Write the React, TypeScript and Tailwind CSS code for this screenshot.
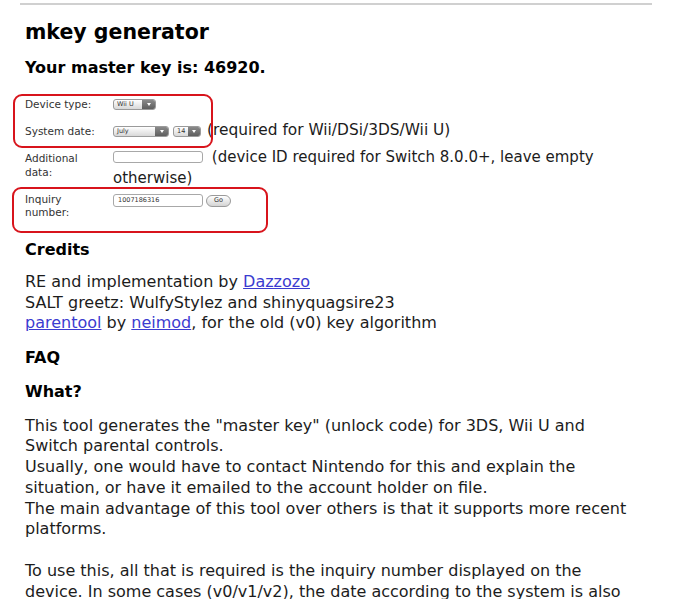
import React from "react";

const font = { fontFamily: '"DejaVu Sans", Verdana, sans-serif' };

function FakeSelect({ label, width, arrow = 13 }: { label: string; width: number; arrow?: number }) {
  return (
    <div
      className="flex h-[11px] overflow-hidden rounded-[3px] border border-[#9a9a9a] bg-gradient-to-b from-[#ffffff] to-[#d8d8d8]"
      style={{ width }}
    >
      <div className="flex-1 pl-[3px] text-[6.5px] leading-[9px] whitespace-nowrap text-[#333]">{label}</div>
      <div
        className="flex shrink-0 items-center justify-center bg-gradient-to-b from-[#8a8a8a] to-[#5e5e5e]"
        style={{ width: arrow }}
      >
        <div className="h-0 w-0 border-x-[2.5px] border-t-[3px] border-x-transparent border-t-white" />
      </div>
    </div>
  );
}

export default function App() {
  return (
    <div className="relative min-h-[599px] w-[678px] bg-white text-[#1c1c1c]" style={font}>
      <div className="pt-[3px]">
        <div className="mx-[20px] h-[2px] w-[632px] bg-[#d0d0d0]" />
      </div>

      <div className="w-[625px] pl-[25px]">
        <h1 className="mt-[13px] text-[20.5px] font-bold leading-[28px] text-black">mkey generator</h1>
        <h2 className="mt-[12px] text-[16px] font-bold leading-[20px] text-black">Your master key is: 46920.</h2>

        {/* form */}
        <div className="mt-[19px] flex items-start">
          <div className="w-[88px] text-[10.5px] leading-[14px] text-[#333]">Device type:</div>
          <div className="mt-[2px]">
            <FakeSelect label="Wii U" width={43} />
          </div>
        </div>

        <div className="mt-[9px] flex items-start">
          <div className="mt-[4px] w-[88px] shrink-0 text-[10.5px] leading-[14px] text-[#333]">System date:</div>
          <div className="mt-[6px] flex shrink-0 gap-[4px]">
            <FakeSelect label="July" width={56} />
            <FakeSelect label="14" width={28} arrow={12} />
          </div>
          <div className="ml-[6px] text-[15.4px] leading-[21px]">(required for Wii/DSi/3DS/Wii U)</div>
        </div>

        <div className="mt-[6px] flex items-start">
          <div className="mt-[4px] w-[88px] shrink-0 text-[10.5px] leading-[14px] text-[#333]">
            Additional
            <br />
            data:
          </div>
          <div className="text-[15px] leading-[21px]">
            <span className="mr-[4px] inline-block h-[12px] w-[90px] rounded-[3px] border border-[#a8a8a8] bg-white align-[-1px]" />
            {" "}(device ID required for Switch 8.0.0+, leave empty otherwise)
          </div>
        </div>

        <div className="mt-[4px] flex items-start">
          <div className="w-[88px] shrink-0 text-[10.5px] leading-[13px] text-[#333]">
            Inquiry
            <br />
            number:
          </div>
          <div className="mt-[1px] flex items-center gap-[3px]">
            <div className="h-[13px] w-[90px] rounded-[3px] border border-[#a8a8a8] bg-white pl-[4px] text-[6.5px] leading-[11px] text-[#333]">
              1007186316
            </div>
            <div className="flex h-[12px] w-[25px] items-center justify-center rounded-full border border-[#9a9a9a] bg-gradient-to-b from-[#ffffff] to-[#d4d4d4] text-[6.5px] leading-none text-[#333]">
              Go
            </div>
          </div>
        </div>

        <h3 className="mt-[21px] text-[16px] font-bold leading-[20px] text-black">Credits</h3>
        <p className="mt-[12px] text-[16px] leading-[20.5px]">
          RE and implementation by{" "}
          <a className="text-[#3b3bd0] underline">Dazzozo</a>
          <br />
          SALT greetz: WulfyStylez and shinyquagsire23
          <br />
          <a className="text-[#3b3bd0] underline">parentool</a> by{" "}
          <a className="text-[#3b3bd0] underline">neimod</a>, for the old (v0) key algorithm
        </p>

        <h3 className="mt-[14px] text-[16px] font-bold leading-[20px] text-black">FAQ</h3>
        <h3 className="mt-[14px] text-[16px] font-bold leading-[20px] text-black">What?</h3>
        <p className="mt-[14px] w-[615px] text-[16px] leading-[20.8px]">
          This tool generates the "master key" (unlock code) for 3DS, Wii U and Switch parental controls.
          <br />
          Usually, one would have to contact Nintendo for this and explain the situation, or have it emailed to the
          account holder on file.
          <br />
          The main advantage of this tool over others is that it supports more recent platforms.
          <br />
          <br />
          To use this, all that is required is the inquiry number displayed on the device. In some cases (v0/v1/v2),
          the date according to the system is also required.
        </p>
      </div>

      {/* annotation boxes */}
      <div className="absolute left-[13px] top-[94px] h-[54px] w-[200px] rounded-[9px] border-[2.5px] border-[#d8141c]" />
      <div className="absolute left-[12px] top-[187px] h-[46px] w-[256px] rounded-[9px] border-[2.5px] border-[#d8141c]" />
    </div>
  );
}
